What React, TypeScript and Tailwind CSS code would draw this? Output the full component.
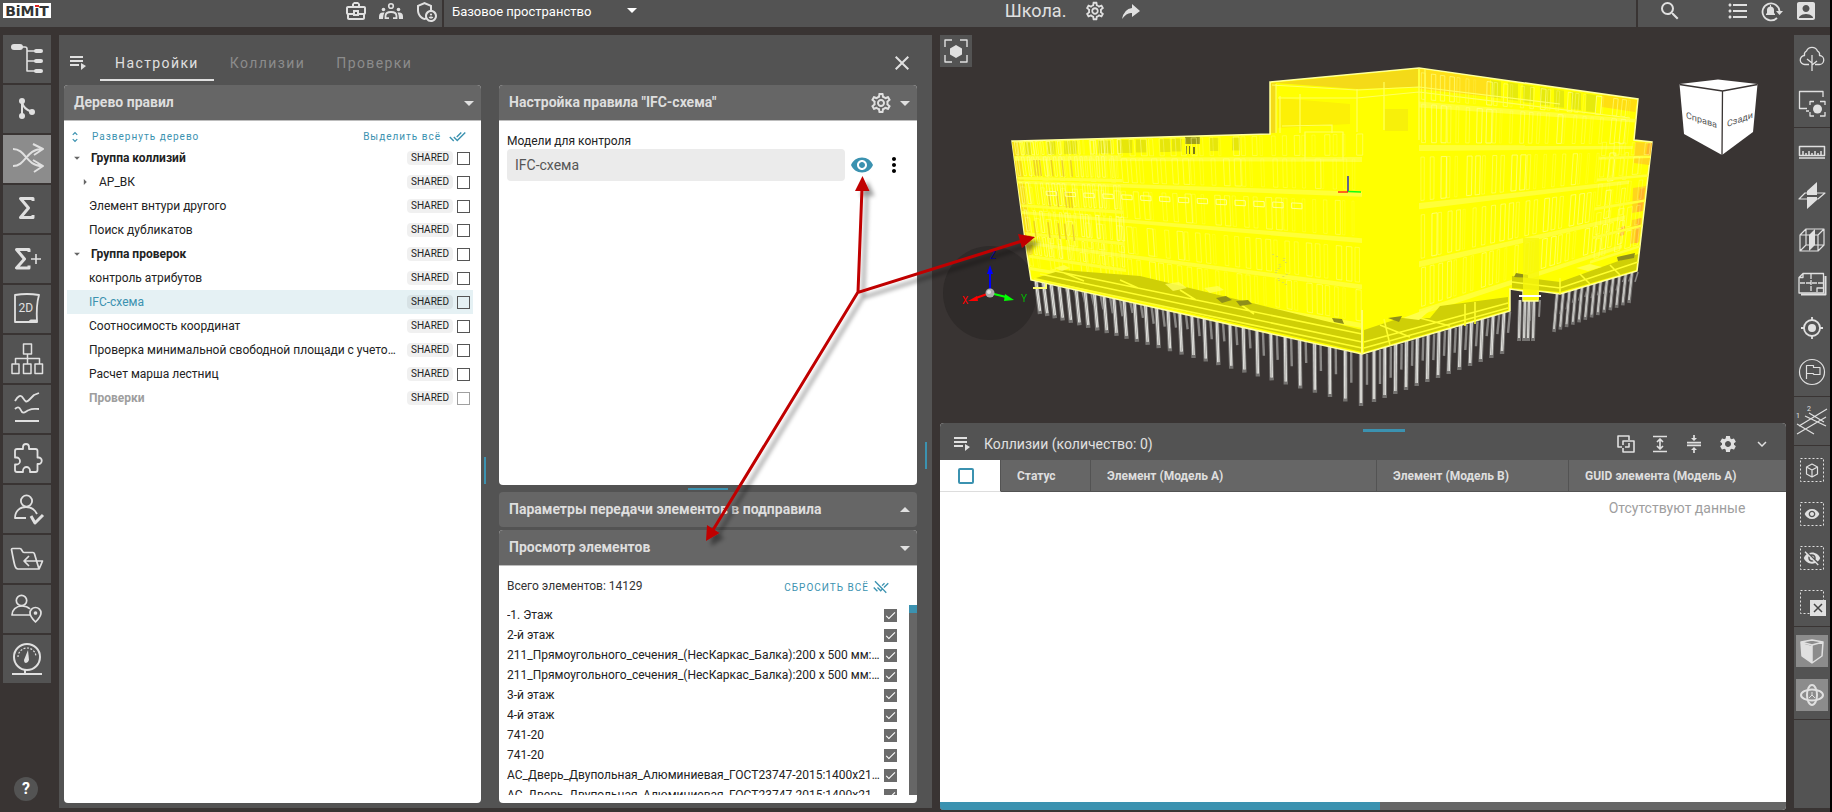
import React, { Fragment } from "react";
import {
  MdAccountBox,
  MdArrowDropDown,
  MdArrowDropUp,
  MdArrowRight,
  MdCheck,
  MdClose,
  MdDoneAll,
  MdExpandMore,
  MdFormatListBulleted,
  MdMoreVert,
  MdOutlineAdminPanelSettings,
  MdOutlineBusinessCenter,
  MdOutlineSettings,
  MdRemoveDone,
  MdSearch,
  MdSettings,
  MdUnfoldMore,
  MdVisibility,
  MdVisibilityOff,
} from "react-icons/md";

type Rule = {
  name: string;
  kind: "group" | "branch" | "leaf";
  active?: boolean;
  disabled?: boolean;
};

const rules: Rule[] = [
  { name: "Группа коллизий", kind: "group" },
  { name: "АР_ВК", kind: "branch" },
  { name: "Элемент внтури другого", kind: "leaf" },
  { name: "Поиск дубликатов", kind: "leaf" },
  { name: "Группа проверок", kind: "group" },
  { name: "контроль атрибутов", kind: "leaf" },
  { name: "IFC-схема", kind: "leaf", active: true },
  { name: "Соотносимость координат", kind: "leaf" },
  { name: "Проверка минимальной свободной площади с учето…", kind: "leaf" },
  { name: "Расчет марша лестниц", kind: "leaf" },
  { name: "Проверки", kind: "leaf", disabled: true },
];

const elements = [
  "-1. Этаж",
  "2-й этаж",
  "211_Прямоугольного_сечения_(НесКаркас_Балка):200 x 500 мм:…",
  "211_Прямоугольного_сечения_(НесКаркас_Балка):200 x 500 мм:…",
  "3-й этаж",
  "4-й этаж",
  "741-20",
  "741-20",
  "АС_Дверь_Двупольная_Алюминиевая_ГОСТ23747-2015:1400x21…",
  "АС_Дверь_Двупольная_Алюминиевая_ГОСТ23747-2015:1400x21…",
];

const Stroke = ({ children, box = "0 0 48 48", size = 48, w = 2 }: any) => (
  <svg
    width={size}
    height={size}
    viewBox={box}
    fill="none"
    stroke="currentColor"
    strokeWidth={w}
    strokeLinejoin="round"
    className="shrink-0"
  >
    {children}
  </svg>
);

const leftTools = [
  {
    title: "Структура",
    icon: (
      <Stroke>
        <rect x="8" y="9" width="12" height="6" rx="3" fill="currentColor" stroke="none" />
        <path d="M19 12h3q2 0 2 2v22h8M24 16h8M24 26h8" strokeWidth="1.6" />
        <g fill="currentColor" stroke="none">
          <rect x="31" y="14" width="9" height="4" rx="2" />
          <rect x="31" y="24" width="9" height="4" rx="2" />
          <rect x="31" y="34" width="9" height="4" rx="2" />
        </g>
      </Stroke>
    ),
  },
  {
    title: "Версии",
    icon: (
      <Stroke>
        <g fill="currentColor" stroke="none">
          <circle cx="19" cy="16" r="3" />
          <circle cx="19" cy="31" r="3" />
          <circle cx="29" cy="27" r="3" />
        </g>
        <path d="M19 16v15M19 17c1 5 4 8 10 10" />
      </Stroke>
    ),
  },
  {
    title: "Коллизии",
    active: true,
    icon: (
      <Stroke>
        <path d="M10 14C23 14 23 31 39 31M10 31C23 31 23 14 39 14M30 9l10 5-9 6M30 25l10 6-9 6" />
      </Stroke>
    ),
  },
  {
    title: "Сумма",
    icon: (
      <Stroke w={3}>
        <path d="M30 16v-2.500H17.500L25.500 23l-8 9.500H30V30" />
      </Stroke>
    ),
  },
  {
    title: "Сумма плюс",
    icon: (
      <Stroke w={3}>
        <path d="M26 17v-2.500H13.500L21.500 24l-8 9H26V30.500" />
        <path d="M28 24h10M33 19v10" strokeWidth="1.6" />
      </Stroke>
    ),
  },
  {
    title: "2D",
    icon: (
      <Stroke w={1.8}>
        <path d="M12 10q12-2 24 0q-3 10-2 27H12z" />
        <path d="M24 37c3 0 2-2 4-2h6v2z" fill="currentColor" strokeWidth="1" />
        <text x="15.500" y="27" fontSize="12" fill="currentColor" stroke="none">
          2D
        </text>
      </Stroke>
    ),
  },
  {
    title: "Организация",
    icon: (
      <Stroke w={1.5}>
        <rect x="20.500" y="9" width="8" height="10" />
        <path d="M24.500 19v10M12.500 29v-5.500h24V29" />
        <rect x="9" y="29" width="7" height="9.500" />
        <rect x="20.500" y="29" width="7.500" height="9.500" />
        <rect x="32" y="29" width="7.500" height="9.500" />
      </Stroke>
    ),
  },
  {
    title: "Графики",
    icon: (
      <Stroke w={1.8}>
        <path d="M12 16c3-5 6-7 8-3 2 3 3 5 6 2l5-5 5-2M12 24c4-4 5 0 7 3 2 2 4-1 7-2 4-2 6-1 10-1M12 36h24" />
      </Stroke>
    ),
  },
  {
    title: "Расширения",
    icon: (
      <Stroke w={1.8}>
        <path d="M20 14v-2a3 3 0 016 0v2h6.500a2 2 0 012 2v6.500h1a3 3 0 010 6.500h-1v6a2 2 0 01-2 2H27v-1.500a3 3 0 00-7 0V37h-6a2 2 0 01-2-2v-5.500h1.500a3.500 3.500 0 000-7H12V16a2 2 0 012-2z" />
      </Stroke>
    ),
  },
  {
    title: "Проверка пользователей",
    icon: (
      <Stroke w={1.8}>
        <circle cx="23.500" cy="16" r="5.600" />
        <path d="M23 33H12C12 26 17 22 23 22c5 0 9 3 11 7" />
        <path d="M28 31l4 7 8-8" strokeWidth="3" />
      </Stroke>
    ),
  },
  {
    title: "Импорт",
    icon: (
      <Stroke w={1.7}>
        <path d="M8.500 14.500q0-1 1-1H17q1 0 2 2t2 2h9q1 0 1.500 1.500L36 34H15q-2 0-3-3T8.500 14.500zM36 34q2-4 3.500-8H21M26 21l-5 5 5 5" />
      </Stroke>
    ),
  },
  {
    title: "Расположение",
    icon: (
      <Stroke w={1.7}>
        <circle cx="18.500" cy="15.500" r="5.200" />
        <path d="M28 30H9c0-5 4-9 10-9 3 0 6 1 8 3" />
        <path d="M32.500 37c-3-3-5.500-6-5.500-9a5.500 5.500 0 0111 0c0 3-2.500 6-5.500 9z" />
        <circle cx="32.500" cy="28" r="1" fill="currentColor" />
      </Stroke>
    ),
  },
  {
    title: "Показатели",
    icon: (
      <Stroke w={2}>
        <circle cx="24" cy="22" r="13" />
        <path d="M15 22a9 9 0 0118 0" strokeWidth="1.200" strokeDasharray="2 1.500" />
        <path d="M25 15l1 10q-1 3-3 3t-2-3z" fill="currentColor" stroke="none" />
        <path d="M9 39h30M22 35v4" />
      </Stroke>
    ),
  },
];

const Dashed = ({ children }: any) => (
  <Stroke size={32} box="0 0 32 32" w={1}>
    <rect x="4.500" y="4.500" width="23" height="23" strokeDasharray="2 2" />
    {children}
  </Stroke>
);

const rightTools = [
  [
    {
      title: "Окружение",
      icon: (
        <Stroke size={32} box="0 0 32 32" w={1.3}>
          <path d="M13 21.500H9a4.500 4.500 0 01-.5-9 4 4 0 012-4.500 6 6 0 0111 0 4 4 0 012 4.500 4.500 4.500 0 01-.5 9h-4M16 12v16M16 20l-5-4M16 22l5-4" />
        </Stroke>
      ),
    },
    {
      title: "Изолировать",
      icon: (
        <Stroke size={32} box="0 0 32 32" w={1.3}>
          <path d="M11 21.500H3.500v-17H27V10M10 24h3M14 18v-3.500h4M24 14.500h5V18M29 25v4h-5M18 29h-4v-4" />
          <circle cx="21.500" cy="22" r="4.500" fill="currentColor" stroke="none" />
        </Stroke>
      ),
    },
  ],
  [
    {
      title: "Линейка",
      icon: (
        <Stroke size={32} box="0 0 32 32" w={1.5}>
          <path d="M3.500 10.500h25v9h-25zM3 22h26M7 19v-4M10 19v-2M13 19v-4M16 19v-2M19 19v-4M22 19v-2M25 19v-4" />
        </Stroke>
      ),
    },
    {
      title: "Сечение",
      icon: (
        <Stroke size={32} box="0 0 32 32" w={1.2}>
          <path d="M9 13h20l-7 6H3z" />
          <path d="M11 11l10-9v13H11zM11 17h10v3l-10 9z" fill="currentColor" stroke="none" />
        </Stroke>
      ),
    },
    {
      title: "Объём сечения",
      icon: (
        <Stroke size={32} box="0 0 32 32" w={1.2}>
          <path d="M4 11h18v16H4zM10 5h18v16H10zM4 11l6-6M22 11l6-6M4 27l6-6M22 27l6-6" />
          <path d="M13 11l6-6v16l-6 6z" fill="currentColor" stroke="none" />
        </Stroke>
      ),
    },
    {
      title: "Планы",
      icon: (
        <Stroke size={32} box="0 0 32 32" w={1.3}>
          <path d="M7 5.500h20.500V25H3V9.500zM3 9.500h4v-4" />
          <path d="M15 6v18M4 15h23" strokeDasharray="5 1" />
          <path d="M27 20h-6v4" />
          <path d="M29.500 8v18.500H5" strokeWidth="2" />
        </Stroke>
      ),
    },
    {
      title: "Центр",
      icon: (
        <Stroke size={32} box="0 0 32 32" w={1.8}>
          <circle cx="16" cy="16" r="8" />
          <circle cx="16" cy="16" r="4" fill="currentColor" stroke="none" />
          <path d="M16 5v3M16 24v3M5 16h3M24 16h3" />
        </Stroke>
      ),
    },
    {
      title: "Метка",
      icon: (
        <Stroke size={32} box="0 0 32 32" w={1.2}>
          <circle cx="16" cy="16" r="12.500" />
          <path d="M10.500 23V9.500h7v2h6.500v7h-6l-1-1h-6.500" />
        </Stroke>
      ),
    },
  ],
  [
    {
      title: "Оси",
      icon: (
        <Stroke size={32} box="0 0 32 32" w={1.2}>
          <path d="M1 19l17 10M1 29L30 12M9 11l21 10M3 21L31 4M13 8l15 9" />
          <text x="0" y="13" fontSize="7" fill="currentColor" stroke="none">
            1
          </text>
          <text x="11" y="6" fontSize="7" fill="currentColor" stroke="none">
            2
          </text>
        </Stroke>
      ),
    },
  ],
  [
    {
      title: "Выделение",
      icon: (
        <Dashed>
          <path d="M16 10l5.500 3v7L16 23l-5.500-3v-7zM10.500 13l5.500 3 5.500-3M16 16v7" strokeWidth="1.200" />
        </Dashed>
      ),
    },
    {
      title: "Показать",
      icon: (
        <Dashed>
          <MdVisibility x={8} y={8} size={16} strokeWidth={0} />
        </Dashed>
      ),
    },
    {
      title: "Скрыть",
      icon: (
        <Dashed>
          <MdVisibilityOff x={7} y={7} size={18} strokeWidth={0} />
        </Dashed>
      ),
    },
    {
      title: "Сбросить",
      icon: (
        <Dashed>
          <rect x="14" y="14" width="16" height="16" fill="#e0e0e0" stroke="none" />
          <path d="M18 18l8 8M26 18l-8 8" stroke="#444" strokeWidth="1.500" />
        </Dashed>
      ),
    },
  ],
  [
    {
      title: "Куб",
      active: true,
      icon: (
        <Stroke size={32} box="0 0 32 32" w={1.5}>
          <path d="M5 7l11-2 11 2-11 3zM5 7l1 14 10 7 10-7 1-14" />
          <path d="M5 8l11 3v17L6 21z" fill="currentColor" stroke="none" />
          <path d="M16 10v17" />
        </Stroke>
      ),
    },
    {
      title: "Вращение",
      active: true,
      icon: (
        <Stroke size={32} box="0 0 32 32" w={2}>
          <ellipse cx="16" cy="16" rx="11" ry="5.500" />
          <ellipse cx="16" cy="16" rx="5" ry="10" />
          <path d="M16 13v3l-3 3M16 16l3 3" strokeWidth="1" />
        </Stroke>
      ),
    },
  ],
];

const MenuIcon = () => (
  <svg width="16" height="16" viewBox="0 0 16 16" fill="currentColor">
    <path d="M0 1h13v2H0zM0 5h13v2H0zM0 9h9v2H0zM11 8l5 3-5 4z" />
  </svg>
);

const CardHead = ({ title, open = true, children }: any) => (
  <div
    className={
      open
        ? "flex h-9 shrink-0 items-center rounded-t border-b border-[#bdbdbd] bg-[#666] pl-[10px]"
        : "flex h-[35px] shrink-0 items-center rounded bg-[#666] pl-[10px]"
    }
  >
    <h2 className="flex-1 pb-px text-sm font-bold text-[#dedede]">{title}</h2>
    {children}
    <button aria-label={open ? "Свернуть" : "Развернуть"} className="text-[#e0e0e0]">
      {open ? <MdArrowDropDown size={24} /> : <MdArrowDropUp size={24} />}
    </button>
  </div>
);

const Header = () => (
  <header className="flex h-[27px] shrink-0 items-stretch bg-[#535353] text-[#e0e0e0]">
    <div className="flex w-[442px] items-start pr-1 pl-[3px]">
      <a
        href="#"
        aria-label="BiMiT"
        className="relative mt-[3px] flex h-[15px] w-12 items-center justify-center bg-white font-['DejaVu_Sans'] text-sm leading-none font-bold text-[#333]"
      >
        BiMiT
        <span className="absolute top-[2px] left-[32px] h-[2px] w-1 bg-[#e02020]"></span>
      </a>
      <div className="ml-auto flex h-[22px] items-center gap-[11px]">
        <button aria-label="Проекты">
          <MdOutlineBusinessCenter size={24} />
        </button>
        <button aria-label="Команда">
          <svg width="24" height="22" viewBox="0 0 24 22" fill="currentColor">
            <circle cx="12" cy="6" r="2.300" fill="none" stroke="currentColor" strokeWidth="1.600" />
            <circle cx="4.500" cy="9.500" r="1.800" />
            <circle cx="19.500" cy="9.500" r="1.800" />
            <path d="M0 19v-2.500Q0 12.500 4 12.500h1.500Q4 15 4 19zM24 19v-2.500q0-4-4-4h-1.500Q20 15 20 19z" />
            <path
              d="M6.500 19v-3q0-4 5.500-4t5.500 4v3M6.500 18.200H10M14 18.200h3.500"
              fill="none"
              stroke="currentColor"
              strokeWidth="1.800"
            />
          </svg>
        </button>
        <button aria-label="Права доступа">
          <MdOutlineAdminPanelSettings size={24} />
        </button>
      </div>
    </div>
    <div className="flex flex-[560] basis-0 items-start border-l-2 border-[#393433] pl-2">
      <label className="relative flex h-6 items-center">
        <span className="sr-only">Пространство</span>
        <select className="w-[196px] appearance-none bg-transparent text-[13px] text-white">
          <option>Базовое пространство</option>
        </select>
        <MdArrowDropDown size={24} className="pointer-events-none absolute right-1 bottom-[2px] text-white" />
      </label>
    </div>
    <div className="flex h-[22px] items-center gap-[14px]">
      <h1 className="pr-1 text-lg leading-[22px]">Школа.</h1>
      <button aria-label="Настройки проекта">
        <MdOutlineSettings size={22} />
      </button>
      <button aria-label="Поделиться">
        <svg width="22" height="22" viewBox="0 0 22 22" fill="currentColor">
          <path d="M12 4l8 7-8 6v-4Q7 12 2 19 4 9 12 8z" />
        </svg>
      </button>
    </div>
    <div className="flex-[500] basis-0"></div>
    <div className="flex w-[194px] items-start border-l-2 border-[#393433] pr-3">
      <div className="flex h-[22px] flex-1 items-center gap-[10px]">
        <button aria-label="Поиск" className="mr-auto ml-5">
          <MdSearch size={24} />
        </button>
        <button aria-label="Список">
          <MdFormatListBulleted size={24} />
        </button>
        <button aria-label="Уведомления">
          <svg width="24" height="22" viewBox="0 0 24 22">
            <path
              d="M17 18A8.500 8.500 0 1119.500 11"
              fill="none"
              stroke="currentColor"
              strokeWidth="1.800"
            />
            <path
              d="M16 11h7l-3.500 4zM6 15v-1l1-1v-3q0-3 3-3.500V5h1v1.500q3 .5 3 3.500v3l1 1v1z"
              fill="currentColor"
            />
          </svg>
        </button>
        <button aria-label="Профиль">
          <MdAccountBox size={24} />
        </button>
      </div>
    </div>
  </header>
);

const RuleTree = () => (
  <section className="flex min-h-0 min-w-0 flex-col rounded bg-white">
    <CardHead title="Дерево правил" />
    <div className="mt-[6px] flex h-[19px] items-center px-1 text-[10px] text-[#3b92b0]">
      <button className="flex items-center gap-[10px] tracking-widest">
        <MdUnfoldMore size={14} />
        Развернуть дерево
      </button>
      <button className="mr-[11px] ml-auto flex items-center gap-2 tracking-widest">
        Выделить всё
        <MdDoneAll size={17} />
      </button>
    </div>
    <ul className="mr-2 ml-[3px]">
      {rules.map((rule, i) => (
        <li
          key={i}
          className={`flex h-6 items-center pr-[3px] text-xs ${rule.active ? "bg-[#e5f1f4]" : ""}`}
        >
          {rule.kind === "group" && (
            <button aria-label="Свернуть группу" className="flex w-6 pl-[3px] text-[#666]">
              <MdArrowDropDown size={14} />
            </button>
          )}
          {rule.kind === "branch" && (
            <button aria-label="Развернуть группу" className="flex w-8 pl-[11px] text-[#666]">
              <MdArrowRight size={14} />
            </button>
          )}
          <label
            htmlFor={`rule-${i}`}
            className={`min-w-0 flex-1 truncate ${rule.kind === "leaf" ? "pl-[22px]" : ""} ${
              rule.kind === "group" || rule.disabled ? "font-bold" : ""
            } ${rule.active ? "text-[#3b92b0]" : rule.disabled ? "text-[#9e9e9e]" : "text-[#222]"}`}
          >
            {rule.name}
          </label>
          <span className="ml-1 flex h-[14px] w-[46px] items-center justify-center rounded bg-black/6 text-[10px] text-[#222]">
            SHARED
          </span>
          <input
            id={`rule-${i}`}
            type="checkbox"
            className={`ml-1 h-[13px] w-[13px] appearance-none border ${
              rule.disabled ? "border-[#a0a0a0]" : "border-[#555]"
            }`}
          />
        </li>
      ))}
    </ul>
  </section>
);

const RuleSettings = () => (
  <div className="flex min-h-0 min-w-0 flex-col">
    <section className="flex min-h-0 flex-[400] basis-0 flex-col rounded bg-white">
      <CardHead title='Настройка правила "IFC-схема"'>
        <button aria-label="Настройки правила" className="text-[#e0e0e0]">
          <MdOutlineSettings size={24} />
        </button>
      </CardHead>
      <div className="px-2 pt-3 text-[#222]">
        <label htmlFor="model" className="block text-xs leading-4">
          Модели для контроля
        </label>
        <div className="flex items-center">
          <input
            id="model"
            readOnly
            defaultValue="IFC-схема"
            className="h-8 min-w-0 flex-1 rounded bg-[#ebebeb] px-2 text-sm text-[#555] outline-none"
          />
          <button aria-label="Показать элементы" className="ml-[5px] text-[#3b92b0]">
            <MdVisibility size={24} />
          </button>
          <button aria-label="Ещё" className="mr-[3px] ml-2 text-black">
            <MdMoreVert size={24} />
          </button>
        </div>
      </div>
    </section>
    <div className="flex h-[7px] shrink-0 items-center justify-center">
      <span className="h-[2px] w-10 bg-[#3b92b0]"></span>
    </div>
    <section className="flex shrink-0 flex-col">
      <CardHead title="Параметры передачи элементов в подправила" open={false} />
    </section>
    <section className="mt-[3px] flex min-h-0 flex-[273] basis-0 flex-col rounded bg-white">
      <CardHead title="Просмотр элементов" />
      <div className="flex h-[39px] shrink-0 items-center justify-between pr-7 pl-2">
        <p className="text-xs text-[#333]">Всего элементов: 14129</p>
        <button className="flex items-center gap-1 pt-[3px] text-[10px] tracking-widest text-[#3b92b0]">
          СБРОСИТЬ ВСЁ
          <MdRemoveDone size={16} />
        </button>
      </div>
      <div className="mb-2 flex min-h-0 flex-1">
        <ul className="min-w-0 flex-1 overflow-hidden pl-2">
          {elements.map((name, i) => (
            <li key={i} className="flex h-5 items-center pr-3 text-xs text-[#222]">
              <label htmlFor={`element-${i}`} className="min-w-0 flex-1 truncate">
                {name}
              </label>
              <span className="grid h-[13px] w-[13px]">
                <input
                  id={`element-${i}`}
                  type="checkbox"
                  defaultChecked
                  className="peer h-[13px] w-[13px] appearance-none border border-[#6b6b6b] [grid-area:1/1] checked:bg-[#6b6b6b]"
                />
                <MdCheck
                  size={13}
                  className="pointer-events-none invisible text-white [grid-area:1/1] peer-checked:visible"
                />
              </span>
            </li>
          ))}
        </ul>
        <div className="w-2 shrink-0 bg-[#666]">
          <div className="h-2 bg-[#3b92b0]"></div>
        </div>
      </div>
    </section>
  </div>
);

// Small repeatable noise so the facade looks irregular but stable
const noise = (n: number) => {
  const v = Math.sin(n * 127.1) * 43758.5;
  return v - Math.floor(v);
};

type Face = { tl: number[]; tr: number[]; bl: number[]; br: number[] };

const at = (f: Face, u: number, v: number) => {
  const tx = f.tl[0] + (f.tr[0] - f.tl[0]) * u;
  const ty = f.tl[1] + (f.tr[1] - f.tl[1]) * u;
  const bx = f.bl[0] + (f.br[0] - f.bl[0]) * u;
  const by = f.bl[1] + (f.br[1] - f.bl[1]) * u;
  return `${(tx + (bx - tx) * v).toFixed(1)} ${(ty + (by - ty) * v).toFixed(1)}`;
};

const quad = (f: Face, u1: number, u2: number, v1: number, v2: number) =>
  `M${at(f, u1, v1)}L${at(f, u2, v1)}L${at(f, u2, v2)}L${at(f, u1, v2)}Z`;

const west: Face = { tl: [1012, 141], tr: [1362, 132], bl: [1029, 268], br: [1362, 325] };
const westEnd: Face = { tl: [1012, 141], tr: [1120, 138], bl: [1029, 256], br: [1126, 270] };
const east: Face = { tl: [1419, 70], tr: [1638, 100], bl: [1419, 312], br: [1622, 246] };
const wing: Face = { tl: [1600, 141], tr: [1652, 142], bl: [1590, 262], br: [1640, 246] };

const storeys = [
  [0.01, 0.12],
  [0.14, 0.3],
  [0.36, 0.54],
  [0.6, 0.78],
  [0.82, 0.98],
];

const Facade = ({ face, cols, seed, glow = 0.5 }: { face: Face; cols: number; seed: number; glow?: number }) => (
  <g fill="none" stroke="#ffff8c" strokeWidth="0.8">
    {storeys.map(([a, b], s) => (
      <Fragment key={s}>
        {Array.from({ length: cols }, (_, i) => {
          const r = noise(seed + s * 61 + i);
          const u = (i + r * 0.5) / cols;
          return (
            <path
              key={i}
              d={quad(face, u, u + (0.2 + r * 0.4) / cols, a, b)}
              opacity={0.2 + r * glow}
            />
          );
        })}
        <path d={quad(face, 0, 1, b + 0.01, b + 0.035)} fill="#ffff38" stroke="none" />
      </Fragment>
    ))}
  </g>
);

const westPiles = Array.from({ length: 29 }, (_, i) => {
  const t = i / 28;
  const k = t * 0.62 + t * t * 0.38;
  return { x: 1040 + 321 * k, top: 281 + 73 * k, bottom: 314 + 92 * k, lean: 4 * (1 - t) };
});
const southPiles = Array.from({ length: 13 }, (_, i) => {
  const t = i / 12;
  return { x: 1374 + 128 * t, top: 350 - 38 * t, bottom: 402 - 48 * t, lean: -2 * t };
});
const eastPiles = Array.from({ length: 13 }, (_, i) => {
  const t = i / 12;
  return { x: 1554 + 75 * t, top: 294 - 22 * t, bottom: 332 - 29 * t, lean: -3 };
});
const porchPiles = [1519, 1524, 1528, 1533].map((x) => ({ x, top: 300, bottom: 341, lean: -1 }));

const Piles = ({ list, w }: any) => (
  <g>
    {list.map((p: any, i: number) => (
      <Fragment key={i}>
        <path
          d={`M${p.x - p.lean + 6} ${p.top}L${p.x + 6} ${p.bottom - 18 - noise(i) * 8}`}
          stroke="#8a8886"
          strokeWidth={w}
        />
        <path d={`M${p.x - p.lean} ${p.top}L${p.x} ${p.bottom}`} stroke="#757371" strokeWidth={w + 2} />
        <path d={`M${p.x - p.lean} ${p.top}L${p.x} ${p.bottom - 3}`} stroke="#f2f2ee" strokeWidth={w} />
        <path d={`M${p.x - p.lean} ${p.top}L${p.x} ${p.bottom - 3}`} stroke="#8d8b88" strokeWidth="0.6" />
      </Fragment>
    ))}
  </g>
);

const Model = () => (
  <svg
    viewBox="940 27 846 396"
    preserveAspectRatio="xMidYMin slice"
    className="h-full w-full"
    role="img"
    aria-label="Модель здания"
  >
    <circle cx="990" cy="293" r="47" fill="#2f2b2a" />
    <Piles list={westPiles} w={2.4} />
    <Piles list={southPiles} w={2.4} />
    <Piles list={eastPiles} w={1.6} />
    <Piles list={porchPiles} w={2} />

    <path
      d="M1012 141L1270 134V82L1419 68L1638 99L1634 140L1652 142L1640 246L1637 271L1560 294L1538 291V301H1523V291L1510 289V311L1362 354L1031 280L1027 254Z"
      fill="#ffff00"
      stroke="#ffff9c"
      strokeWidth="1.500"
    />

    <path d="M1271 83L1418 69V87L1357 89L1276 83V133H1271Z" fill="#f4da18" />
    <path d="M1278 98L1350 104V124L1278 128Z" fill="#fcf006" />
    <path d="M1420 69L1490 79V97L1420 89Z" fill="#ffe01a" />
    <path d="M1602 95L1637 100L1635 112L1602 107Z" fill="#ffde10" />
    <path d="M1385 109h23v22h-23z" fill="#f7f00a" />
    <path d="M1635 142l17 1-3 22-15-2zM1633 188l13-2-3 25-11 2zM1632 220l10-2-3 24-9 2z" fill="#ffd61c" />
    <path
      d="M1648 143l4 0-2 13-4-1zM1640 189l5-1-3 23-5 1zM1621 227l4-1-1 9-4 1zM1637 219l4-1-3 25-3 0z"
      fill="#ffb52a"
    />
    <path d="M1012 142l7 0 14 112-5 2z" fill="#f8e010" />
    {[1025, 1047, 1064, 1098, 1118, 1136, 1160, 1172, 1210, 1232].map((x, i) => (
      <path key={x} d={`M${x} ${142 - i * 0.5}h${6 + noise(i) * 9}v13h-${6 + noise(i) * 9}z`} fill="#e6e60a" />
    ))}
    <path d="M1185 137h15v7h-15z" fill="#a0a018" />
    <path d="M1186 146h1v8h-1zM1189 146h1v8h-1zM1193 147h2v7h-2z" fill="#77771a" />
    {[1491, 1508, 1523, 1540, 1554, 1571, 1586].map((x, i) => (
      <path key={x} d={`M${x} ${80 + i * 2.3}l10 1.500v17l-10 -1z`} fill="#e6ea0c" />
    ))}

    <Facade face={west} cols={34} seed={3} />
    <Facade face={westEnd} cols={20} seed={41} glow={0.8} />
    <Facade face={east} cols={24} seed={17} glow={0.8} />
    <Facade face={wing} cols={5} seed={29} />

    {/* amber window slots on the left end */}
    {Array.from({ length: 16 }, (_, i) => {
      const u = 0.02 + noise(i + 70) * 0.14;
      const v = [0.15, 0.38, 0.62][i % 3];
      return <path key={i} d={quad(west, u, u + 0.004, v, v + 0.12)} fill="#e2bb2a" opacity="0.7" />;
    })}
    {Array.from({ length: 14 }, (_, i) => {
      const u = 0.08 + i * 0.055;
      return (
        <path
          key={i}
          d={quad(west, u, u + 0.03, 0.385, 0.415)}
          fill="none"
          stroke="#ffffa0"
          strokeWidth="0.900"
        />
      );
    })}

    {/* floor slab seen from below */}
    <path d="M1036 278L1062 270L1140 276L1256 304L1362 330V352Z" fill="#cfcf06" />
    <path d="M1364 330L1400 318L1430 318L1440 306L1508 297V310L1364 352Z" fill="#cfcf06" />
    <path d="M1512 276L1560 282L1638 254L1636 270L1560 292L1512 288Z" fill="#cfcf06" />
    <g fill="none" stroke="#ffff2e" strokeWidth="1.600">
      <path d="M1040 274L1362 342M1050 270L1362 334M1034 279L1362 348M1064 273l20 8M1120 280l18 8M1180 290l16 10M1240 304l14 10" />
      <path d="M1364 342L1508 303M1364 348L1508 308M1380 325l30 12M1420 318l30 8M1390 345l-6-26M1465 326v-22M1475 324v-22" />
      <path d="M1512 282L1560 288L1638 262M1560 294v-16M1590 284l-10-10M1620 275l-10-10" />
    </g>
    <g fill="#8f8f1a">
      <path d="M1216 298l10-2 6 4-10 3zM1236 301l12-1 4 4-12 2zM1332 318l10 1 2 5-10-2zM1388 318l14-2-3 6z" />
      <path d="M1516 273l12 2v3l-14-1zM1617 257l18-4-1 5-16 3z" />
    </g>
    <path d="M1403 318l32-12-16 14z" fill="#ffff4a" />
    <g fill="#ffff58" opacity="0.8">
      <path d="M1054 268l10-3 6 3-8 3zM1165 284l14-2 8 6-14 3zM1204 288l14-2 6 4-14 3zM1576 268l14-4 12 3-14 4z" />
    </g>
    <path d="M1523 238h16v62h-16z" fill="#f7f70c" opacity="0.8" />
    <path d="M1362 310V354M1033 288h13v-4" fill="none" stroke="#ffff70" strokeWidth="2" />
    <path d="M1419 68V140M1425 69V140M1357 89V132M1384 82V130" fill="none" stroke="#ffff60" strokeWidth="1.200" />
    <path
      d="M1272 85L1357 90L1419 87L1560 104M1278 98H1357L1419 92L1630 118M1280 133V96M1300 133V94M1276 133V84M1305 132h38v28h-38zM1282 126l50-1v8"
      fill="none"
      stroke="#ffff60"
      strokeWidth="1.200"
    />
    <path d="M1519 296h22" stroke="#fff" strokeWidth="2" />
    <g fill="#dede50">
      {Array.from({ length: 16 }, (_, i) => (
        <path key={i} d={`M${1272 + noise(i) * 14} ${254 + i * 2}h2v1h-2z`} />
      ))}
    </g>

    {/* scene origin */}
    <path d="M1348 192V176" stroke="#1010d0" strokeWidth="1.300" />
    <path d="M1348 192h-10" stroke="#ff1010" strokeWidth="1.300" />
    <path d="M1348 191.500l13 .5" stroke="#10ff10" strokeWidth="1.300" />

    {/* axis gizmo */}
    <path d="M990 293V272" stroke="#0000ff" strokeWidth="2" />
    <path d="M990 265l3 9h-6z" fill="#0000ff" />
    <path d="M990 293L976 298" stroke="#ff0000" strokeWidth="2" />
    <path d="M968 301l9-5 1 5z" fill="#ff0000" />
    <path d="M990 293L1006 297" stroke="#00ff00" strokeWidth="2" />
    <path d="M1014 300l-9-6-1 7z" fill="#00ff00" />
    <circle cx="990" cy="293" r="4.500" fill="#aaa" />
    <circle cx="989" cy="292" r="2" fill="#ddd" />
    <g fontSize="10">
      <text x="962" y="304" fill="#ff0000">
        X
      </text>
      <text x="1021" y="302" fill="#00b800">
        Y
      </text>
      <text x="990" y="259" fill="#0000a8">
        Z
      </text>
    </g>

    {/* view cube */}
    <path d="M1679.500 84L1718 79.500L1757.500 84L1753 132L1722 155L1684 134Z" fill="#fff" />
    <path
      d="M1679.500 84.500L1722.500 91L1757.500 84.500M1722.500 91L1722 155"
      fill="none"
      stroke="#393433"
      strokeWidth="1.300"
    />
    <g fontSize="9" fill="#555">
      <text x="0" y="0" transform="translate(1686 118) skewY(18)">
        Справа
      </text>
      <text x="0" y="0" transform="translate(1727 127) skewY(-20)">
        Сзади
      </text>
    </g>
  </svg>
);

const Viewer = () => (
  <div className="relative min-h-0 flex-[396] basis-0">
    <Model />
    <button
      aria-label="Вписать модель"
      className="absolute top-2 left-0 flex h-8 w-8 items-center justify-center bg-[#535353] text-[#e0e0e0]"
    >
      <Stroke size={24} box="0 0 24 24" w={1.4}>
        <path d="M1 8V1h7M16 1h7v7M23 16v7h-7M8 23H1v-7" />
        <path d="M12 6l6 3.500v6L12 19l-6-3.500v-6z" fill="currentColor" stroke="none" />
      </Stroke>
    </button>
  </div>
);

const Collisions = () => (
  <section className="relative flex min-h-0 flex-[387] basis-0 flex-col overflow-hidden rounded bg-white">
    <span className="absolute top-[6px] left-1/2 h-[3px] w-[42px] bg-[#3b92b0]"></span>
    <div className="flex h-[37px] shrink-0 items-center bg-[#535353] pt-1 pr-3 pl-[14px] text-[#e0e0e0]">
      <button aria-label="Меню коллизий">
        <MenuIcon />
      </button>
      <h2 className="ml-[14px] flex-1 text-sm">Коллизии (количество: 0)</h2>
      <div className="flex gap-[10px]">
        <button aria-label="Пересечение" className="flex h-6 w-6 items-center justify-center">
          <Stroke size={18} box="0 0 18 18" w={1.6}>
            <path d="M5 12H1V1h11v4M6 10V6h11v11H6v-4M12 8v4H8" />
          </Stroke>
        </button>
        <button aria-label="Развернуть строки" className="flex h-6 w-6 items-center justify-center">
          <Stroke size={18} box="0 0 18 18" w={1.7}>
            <path d="M2 1.500h14M2 16.500h14M9 4v10M6 7l3-3 3 3M6 11l3 3 3-3" />
          </Stroke>
        </button>
        <button aria-label="Свернуть строки" className="flex h-6 w-6 items-center justify-center">
          <Stroke size={18} box="0 0 18 18" w={1.7}>
            <path d="M2 7.700h14M2 10.300h14M9 0v4M9 14v4" />
            <path d="M6 3h6L9 6zM6 15h6l-3-3z" fill="currentColor" stroke="none" />
          </Stroke>
        </button>
        <button aria-label="Настройки таблицы" className="flex h-6 w-6 items-center justify-center">
          <MdSettings size={20} />
        </button>
        <button aria-label="Свернуть" className="flex h-6 w-6 items-center justify-center">
          <MdExpandMore size={18} />
        </button>
      </div>
    </div>
    <div className="min-h-0 flex-1 overflow-hidden">
      <table className="w-[1474px] table-fixed border-separate border-spacing-0 text-left">
        <thead className="text-xs text-[#dedede]">
          <tr className="h-8">
            <th className="w-[61px] border-r border-b border-r-[#535353] border-b-[#ddd] bg-white pl-[10px]">
              <input
                type="checkbox"
                aria-label="Выбрать все"
                className="mr-4 ml-2 block h-4 w-4 appearance-none rounded-[2px] border-2 border-[#3b92b0]"
              />
            </th>
            <th className="w-[90px] border-r border-b border-[#535353] bg-[#666] pl-4">Статус</th>
            <th className="w-[286px] border-r border-b border-[#535353] bg-[#666] pl-4">Элемент (Модель А)</th>
            <th className="w-[192px] border-r border-b border-[#535353] bg-[#666] pl-4">Элемент (Модель В)</th>
            <th className="border-b border-[#535353] bg-[#666] pl-4">GUID элемента (Модель А)</th>
          </tr>
        </thead>
        <tbody>
          <tr>
            <td colSpan={5} className="h-8 text-center text-sm text-[#9e9e9e]">
              Отсутствуют данные
            </td>
          </tr>
        </tbody>
      </table>
    </div>
    <div className="h-2 shrink-0 bg-[#666]">
      <div className="h-2 w-[52%] bg-[#3b92b0]"></div>
    </div>
  </section>
);

// Callout arrows pointing from the eye button to the model and the element list
const Arrows = () => (
  <svg
    viewBox="0 0 1830 812"
    preserveAspectRatio="none"
    className="pointer-events-none absolute inset-0 h-full w-full"
    aria-hidden="true"
  >
    <defs>
      <filter id="shade" x="-10%" y="-10%" width="120%" height="120%">
        <feDropShadow dx="5" dy="5" stdDeviation="2" floodColor="#000" floodOpacity="0.4" />
      </filter>
    </defs>
    <g filter="url(#shade)" stroke="#c00000" strokeWidth="3" fill="none">
      <path d="M862 188L858 292.500L1022 241M858 292L713 530" />
      <path
        d="M862.500 176L869.500 191H855zM1035 237L1018 234L1022 248zM706 541L707 525L719.500 533z"
        fill="#c00000"
        stroke="none"
      />
    </g>
  </svg>
);

const App = () => {
  return (
    <div className="relative flex h-screen min-h-[720px] flex-col overflow-hidden border-r-2 border-black bg-[#393433] font-['Roboto',sans-serif]">
      <Header />
      <div className="flex min-h-0 flex-1">
        <nav className="flex w-[59px] shrink-0 flex-col gap-[2px] pt-2 pl-[3px] text-[#e0e0e0]">
          {leftTools.map((tool) => (
            <button
              key={tool.title}
              aria-label={tool.title}
              className={`flex h-12 w-12 items-center justify-center ${
                tool.active ? "bg-[#8c8c8c]" : "bg-[#535353]"
              }`}
            >
              {tool.icon}
            </button>
          ))}
          <button
            aria-label="Справка"
            className="mt-auto mb-[11px] ml-[11px] h-6 w-6 rounded-full bg-[#535353] text-base leading-6 font-bold text-white"
          >
            ?
          </button>
        </nav>

        <main className="grid min-w-0 flex-1 grid-cols-[minmax(0,873fr)_minmax(0,846fr)] gap-2">
          <section className="mt-2 mb-1 flex min-h-0 flex-col bg-[#535353] pb-[5px]">
            <div className="flex h-[50px] shrink-0 items-start pt-[10px] text-[#e0e0e0]">
              <button aria-label="Меню" className="flex h-9 w-[41px] items-center pl-[11px]">
                <MenuIcon />
              </button>
              <div role="tablist" className="flex text-sm text-[#8c8c8c]">
                <button
                  role="tab"
                  className="h-9 border-b-2 border-[#e0e0e0] px-[15px] pt-[2px] tracking-widest text-[#e0e0e0]"
                >
                  Настройки
                </button>
                <button role="tab" className="h-9 border-b-2 border-transparent px-4 pt-[2px] tracking-widest">
                  Коллизии
                </button>
                <button role="tab" className="h-9 border-b-2 border-transparent px-[15px] pt-[2px] tracking-widest">
                  Проверки
                </button>
              </div>
              <button aria-label="Закрыть" className="mr-[18px] ml-auto flex h-9 items-center">
                <MdClose size={24} />
              </button>
            </div>
            <div className="grid min-h-0 flex-1 grid-cols-[minmax(0,417fr)_18px_minmax(0,418fr)_15px] pl-[5px]">
              <RuleTree />
              <div className="flex items-center pt-[52px] pl-[3px]">
                <span className="h-[27px] w-[2px] bg-[#3b92b0]"></span>
              </div>
              <RuleSettings />
              <div className="flex items-center pt-[22px] pl-2">
                <span className="h-[27px] w-[2px] bg-[#3b92b0]"></span>
              </div>
            </div>
          </section>

          <section className="flex min-h-0 min-w-0 flex-col pb-[2px]">
            <Viewer />
            <Collisions />
          </section>
        </main>

        <aside className="mt-2 mb-1 ml-2 w-9 shrink-0 overflow-hidden bg-[#535353] text-[#e0e0e0]">
          {rightTools.map((group, g) => (
            <div key={g} className="border-b border-[#393433] py-[2px]">
              {group.map((tool: any) => (
                <div key={tool.title} className="flex h-11 items-center justify-center">
                  <button aria-label={tool.title} className={tool.active ? "bg-[#8c8c8c]" : ""}>
                    {tool.icon}
                  </button>
                </div>
              ))}
            </div>
          ))}
        </aside>
      </div>
      <Arrows />
    </div>
  );
};

export default App;
